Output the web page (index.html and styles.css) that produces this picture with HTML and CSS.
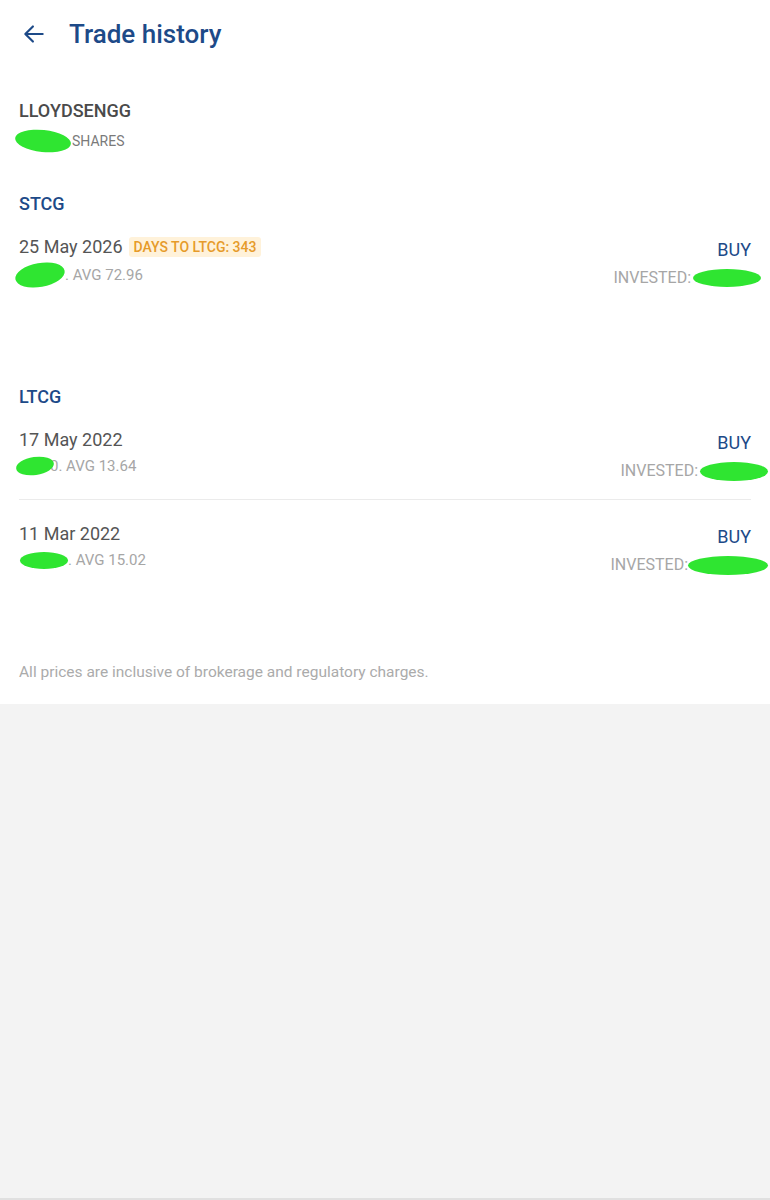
FILE: index.html
```html
<!DOCTYPE html>
<html lang="en">
<head>
    <meta charset="UTF-8">
    <meta name="viewport" content="width=device-width, initial-scale=1.0">
    <title>Trade history</title>
    <link rel="stylesheet" href="styles.css">
</head>
<body>
    <div class="sheet">
        <!-- Header -->
        <div class="top-bar">
            <svg class="back-icon" viewBox="0 0 24 24" width="26" height="26">
                <path d="M20 12H5M11 5l-7 7 7 7" fill="none" stroke="#1d4a88" stroke-width="2" stroke-linecap="round" stroke-linejoin="round"/>
            </svg>
            <h1>Trade history</h1>
        </div>

        <div class="stock">
            <div class="symbol">LLOYDSENGG</div>
            <div class="qty"><span class="blot blot-shares"></span>SHARES</div>
        </div>

        <!-- Short term -->
        <div class="group">
            <h2>STCG</h2>
            <div class="trade">
                <div class="trade-left">
                    <div class="trade-date">25 May 2026 <span class="badge">DAYS TO LTCG: 343</span></div>
                    <div class="trade-avg"><span class="blot blot-avg1"></span>. AVG 72.96</div>
                </div>
                <div class="trade-right">
                    <div class="side">BUY</div>
                    <div class="invested">INVESTED: <span class="blot blot-inv1"></span></div>
                </div>
            </div>
        </div>

        <!-- Long term -->
        <div class="group group-ltcg">
            <h2>LTCG</h2>
            <div class="trade">
                <div class="trade-left">
                    <div class="trade-date">17 May 2022</div>
                    <div class="trade-avg"><span class="blot blot-avg2"></span>0. AVG 13.64</div>
                </div>
                <div class="trade-right">
                    <div class="side">BUY</div>
                    <div class="invested">INVESTED:<span class="blot blot-inv2"></span></div>
                </div>
            </div>
            <div class="trade trade-split">
                <div class="trade-left">
                    <div class="trade-date">11 Mar 2022</div>
                    <div class="trade-avg"><span class="blot blot-avg3"></span>. AVG 15.02</div>
                </div>
                <div class="trade-right">
                    <div class="side">BUY</div>
                    <div class="invested">INVESTED:<span class="blot blot-inv3"></span></div>
                </div>
            </div>
        </div>

        <p class="note">All prices are inclusive of brokerage and regulatory charges.</p>
    </div>
    <div class="rest"></div>
</body>
</html>
```

FILE: styles.css
```css
html, body {
    margin: 0;
    padding: 0;
}
body {
    font-family: Roboto, "Liberation Sans", sans-serif;
    background: #f3f3f3;
    height: 1200px;
    overflow: hidden;
    display: flex;
    flex-direction: column;
}
.sheet {
    background: white;
    padding: 0 19px;
    height: 704px;
    box-sizing: border-box;
}
.rest {
    flex: 1;
    border-bottom: 2px solid #e0e0e0;
}
.top-bar {
    display: flex;
    align-items: center;
    height: 68px;
}
.back-icon {
    margin-left: 2px;
    margin-right: 22px;
}
.top-bar h1 {
    margin: 0;
    font-size: 26px;
    font-weight: 500;
    color: #1d4a88;
}
.stock {
    margin-top: 31px;
}
.symbol {
    font-size: 18px;
    line-height: 24px;
    font-weight: 500;
    color: #4a4a4a;
}
.qty {
    margin-top: 7px;
    font-size: 14px;
    line-height: 20px;
    color: #7a7a7a;
    display: flex;
    align-items: center;
}
.group {
    margin-top: 40px;
}
.group-ltcg {
    margin-top: 79px;
}
.group h2 {
    margin: 0;
    font-size: 18px;
    line-height: 24px;
    font-weight: 500;
    color: #1d4a88;
}
.trade {
    display: flex;
    justify-content: space-between;
    padding: 19px 0 18px;
}
.trade-split {
    border-top: 1px solid #ebebeb;
    padding-top: 22px;
}
.trade-date {
    font-size: 18px;
    line-height: 24px;
    color: #555;
    display: flex;
    align-items: center;
}
.badge {
    margin-left: 6px;
    padding: 0 5px;
    line-height: 20px;
    background: #fff2da;
    color: #e69b2a;
    font-size: 14px;
    font-weight: 500;
    border-radius: 3px;
}
.trade-avg {
    margin-top: 4px;
    font-size: 15px;
    line-height: 20px;
    color: #a6a6a6;
    display: flex;
    align-items: center;
}
.trade-right {
    display: flex;
    flex-direction: column;
    align-items: flex-end;
}
.side {
    margin-top: 3px;
    font-size: 18px;
    line-height: 24px;
    color: #1d4a88;
}
.invested {
    margin-top: 6px;
    font-size: 16px;
    line-height: 20px;
    color: #a6a6a6;
    display: flex;
    align-items: center;
}
.blot {
    display: inline-block;
    background: #2fe531;
    border-radius: 50%;
}
.blot-shares {
    width: 56px;
    height: 22px;
    margin-left: -4px;
    margin-right: 1px;
    transform: rotate(6deg);
}
.blot-avg1 {
    width: 50px;
    height: 24px;
    margin-left: -4px;
    transform: rotate(-10deg);
}
.blot-avg2 {
    width: 38px;
    height: 18px;
    margin-left: -3px;
    margin-right: -4px;
    transform: rotate(-8deg);
}
.blot-avg3 {
    width: 48px;
    height: 17px;
    margin-left: 1px;
}
.blot-inv1 {
    width: 68px;
    height: 18px;
    margin-right: -10px;
    margin-left: 2px;
}
.blot-inv2 {
    width: 68px;
    height: 19px;
    margin-right: -17px;
    margin-left: 2px;
}
.blot-inv3 {
    width: 80px;
    height: 19px;
    margin-right: -17px;
}
.note {
    margin: 69px 0 0;
    font-size: 15.5px;
    line-height: 20px;
    color: #ababab;
}
```
